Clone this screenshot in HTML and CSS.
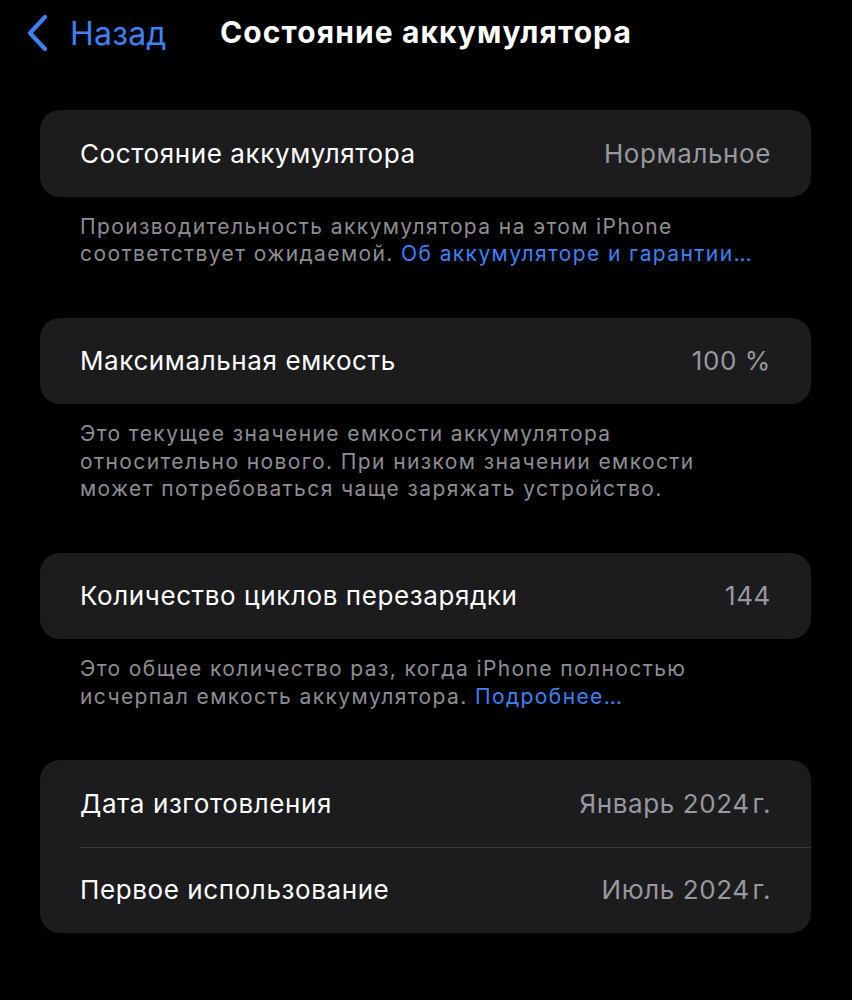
FILE: index.html
```html
<!DOCTYPE html>
<html lang="ru">
<head>
<meta charset="utf-8">
<link rel="stylesheet" href="styles.css">
</head>
<body>
<header class="nav">
  <a class="back">
    <svg class="chev" width="26" height="40" viewBox="0 0 26 40"><path d="M21 4 L6 20 L21 36" fill="none" stroke="#3b82f6" stroke-width="4.2" stroke-linecap="round" stroke-linejoin="round"/></svg>
    <span>Назад</span>
  </a>
  <h1 class="title">Состояние аккумулятора</h1>
</header>
<main class="content">
  <section class="group">
    <div class="card">
      <div class="row"><span class="label">Состояние аккумулятора</span><span class="value">Нормальное</span></div>
    </div>
    <p class="note">Производительность аккумулятора на этом iPhone соответствует ожидаемой. <span class="link">Об аккумуляторе и гарантии…</span></p>
  </section>
  <section class="group">
    <div class="card">
      <div class="row"><span class="label">Максимальная емкость</span><span class="value">100 %</span></div>
    </div>
    <p class="note">Это текущее значение емкости аккумулятора относительно нового. При низком значении емкости может потребоваться чаще заряжать устройство.</p>
  </section>
  <section class="group">
    <div class="card">
      <div class="row"><span class="label">Количество циклов перезарядки</span><span class="value">144</span></div>
    </div>
    <p class="note">Это общее количество раз, когда iPhone полностью исчерпал емкость аккумулятора. <span class="link">Подробнее…</span></p>
  </section>
  <section class="group">
    <div class="card">
      <div class="row"><span class="label">Дата изготовления</span><span class="value">Январь 2024&#8202;г.</span></div>
      <div class="row sep"><span class="label">Первое использование</span><span class="value">Июль 2024&#8202;г.</span></div>
    </div>
  </section>
</main>
</body>
</html>
```
FILE: styles.css
```css
html, body {
  margin: 0;
  padding: 0;
  background: #000;
}
body {
  width: 852px;
  height: 1000px;
  overflow: hidden;
  font-family: Inter, "Noto Sans", "DejaVu Sans", sans-serif;
  color: #fff;
}
.nav {
  position: relative;
  height: 66px;
  display: flex;
  align-items: center;
}
.back {
  display: flex;
  align-items: center;
  color: #3b82f6;
  font-size: 32px;
  padding-left: 24px;
  gap: 20px;
}
.back span { letter-spacing: 0.2px; }
.title {
  position: absolute;
  left: 0;
  right: 0;
  top: 0;
  height: 64px;
  margin: 0;
  display: flex;
  align-items: center;
  justify-content: center;
  font-size: 30px;
  font-weight: 700;
  letter-spacing: 1.1px;
  pointer-events: none;
}
.content {
  padding: 44px 41px 0 40px;
}
.group {
  margin-bottom: 50px;
}
.card {
  background: #1c1c1e;
  border-radius: 20px;
  overflow: hidden;
}
.row {
  height: 86.5px;
  display: flex;
  align-items: center;
  justify-content: space-between;
  padding: 0 40px;
  font-size: 26px;
  letter-spacing: 0.6px;
}
.row.sep {
  position: relative;
}
.row.sep::before {
  content: "";
  position: absolute;
  left: 40px;
  right: 0;
  top: 0;
  height: 1px;
  background: #38383a;
}
.value {
  color: #98989e;
}
.note {
  margin: 16px 0 0;
  padding: 0 50px 0 40px;
  font-size: 21px;
  line-height: 27.5px;
  color: #8d8d92;
  letter-spacing: 1.4px;
}
.link {
  color: #3b82f6;
}
```
